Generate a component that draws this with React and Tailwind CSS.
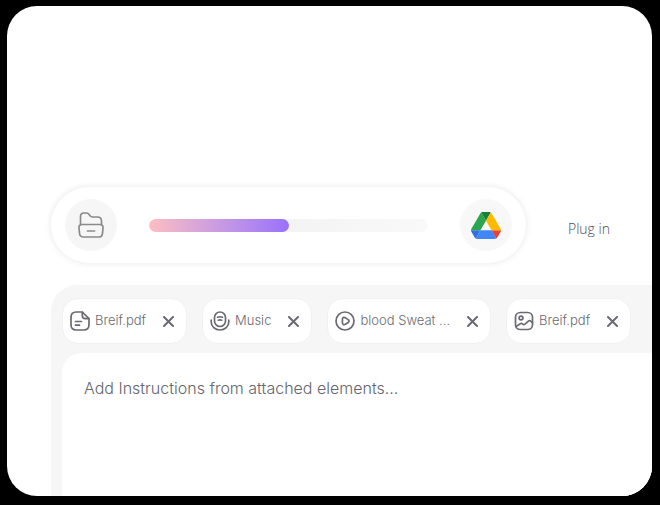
// App.jsx
import { useState } from 'react'

const ATTACHMENTS = [
  { id: 1, name: 'Breif.pdf',       icon: DocIcon,   label: 'document' },
  { id: 2, name: 'Music',           icon: MicIcon,   label: 'audio' },
  { id: 3, name: 'blood Sweat ...', icon: PlayIcon,  label: 'video' },
  { id: 4, name: 'Breif.pdf',       icon: ImageIcon, label: 'image' },
]

const PROGRESS = 50

function Svg({ children }) {
  return (
    <svg
      viewBox="0 0 20 20"
      fill="none"
      stroke="currentColor"
      strokeWidth="1.7"
      strokeLinecap="round"
      strokeLinejoin="round"
      aria-hidden="true"
      className="size-5 shrink-0"
    >
      {children}
    </svg>
  )
}

function DocIcon() {
  return (
    <Svg>
      <path d="M12.3 1H6.2C2.8 1 1 2.8 1 6.2v7.6C1 17.2 2.8 19 6.2 19h7.6c3.4 0 5.2-1.8 5.2-5.2V7.7z" />
      <path d="M12.3 1v3.6c0 2.2.9 3.1 3.1 3.1H19" />
      <path d="M5.5 10.5h6M5.5 14.2h4" />
    </Svg>
  )
}

function MicIcon() {
  return (
    <Svg>
      <rect x="4.5" y="1" width="11" height="14.5" rx="5.5" />
      <path d="M1.2 9v1.8c0 4.600 3.900 8.200 8.800 8.200s8.800-3.600 8.800-8.200V9" />
      <path d="M7.500 6.200c1.600-.6 3.400-.6 5 0M8.300 9.200c1.100-.3 2.300-.3 3.400 0" />
    </Svg>
  )
}

function PlayIcon() {
  return (
    <Svg>
      <circle cx="10" cy="10" r="9" />
      <path d="M7.400 10V8.500c0-1.900 1.300-2.600 2.900-1.700l1.300.8 1.300.8c1.600.9 1.600 2.400 0 3.300l-1.300.8-1.300.8c-1.600.9-2.900.1-2.900-1.700z" />
    </Svg>
  )
}

function ImageIcon() {
  return (
    <Svg>
      <rect x="1.5" y="1.5" width="17" height="17" rx="4.8" />
      <circle cx="7" cy="7" r="1.9" />
      <path d="M2 15.600l4.200-2.800c.7-.5 1.600-.4 2.200.1l.3.300c.6.600 1.600.6 2.300 0l3.400-3c.7-.6 1.700-.6 2.300 0l1.800 1.500" />
    </Svg>
  )
}

function CloseIcon() {
  return (
    <svg viewBox="0 0 11 11" className="size-[11px]" stroke="currentColor"
         strokeWidth="2" strokeLinecap="round" aria-hidden="true">
      <path d="M1 1l9 9M10 1l-9 9" />
    </svg>
  )
}

function FolderIcon() {
  return (
    <svg viewBox="0 0 26 26" fill="none" stroke="currentColor" strokeWidth="1.7"
         strokeLinecap="round" strokeLinejoin="round" className="size-[26px]"
         aria-hidden="true">
      <path d="M2.5 12.5V4.5C2.5 2 3.500 1 6 1h2.200c1.500 0 2.300.5 3 1.500l1 1.400c.6.900 1.200 1.100 2.200 1.100h5.100c2.900 0 4 1.100 4 4v3.500" />
      <path d="M4.200 12.500h17.600c2.300 0 3.400 1.100 3.200 3.200l-.5 5.600c-.2 2.600-1.300 3.700-3.900 3.700H5.400c-2.600 0-3.700-1.100-3.900-3.700L1 15.700c-.2-2.100.9-3.200 3.200-3.200z" />
      <path d="M9.500 19h7" />
    </svg>
  )
}

function DriveIcon() {
  return (
    <svg viewBox="0 0 87.3 78" className="h-[27px] w-[30px]" aria-hidden="true">
      <path fill="#2f6fe0" d="m6.600 66.850 3.850 6.650c.8 1.400 1.950 2.500 3.300 3.300l13.750-23.800H0c0 1.550.4 3.100 1.200 4.500z" />
      <path fill="#2da44f" d="m43.650 25-13.750-23.800c-1.350.8-2.500 1.900-3.300 3.300L1.200 48.500A9 9 0 0 0 0 53h27.500z" />
      <path fill="#ea4335" d="m73.550 76.800c1.350-.8 2.500-1.900 3.300-3.300l1.600-2.750L86.100 57.500c.8-1.400 1.200-2.950 1.200-4.500H59.800l5.850 11.500z" />
      <path fill="#188038" d="M43.650 25 57.400 1.200C56.050.4 54.500 0 52.900 0H34.400c-1.600 0-3.150.45-4.500 1.200z" />
      <path fill="#4285f4" d="M59.800 53H27.500L13.750 76.800c1.350.8 2.900 1.200 4.500 1.200h50.800c1.600 0 3.150-.45 4.500-1.200z" />
      <path fill="#ffba00" d="m73.400 26.500-12.700-22c-.8-1.400-1.950-2.500-3.300-3.300L43.650 25l16.150 28h27.450c0-1.550-.4-3.100-1.200-4.500z" />
    </svg>
  )
}

function Chip({ item, onRemove }) {
  const Icon = item.icon
  return (
    <li className="flex h-[46px] shrink-0 items-center rounded-2xl border border-[#f1f1f1]
                   bg-white pl-[7px] pr-2 text-[#6a6a72]">
      <Icon />
      <span className="ml-[5px] text-[13px]">{item.name}</span>
      <button
        type="button"
        onClick={() => onRemove(item.id)}
        aria-label={`Remove ${item.label} ${item.name}`}
        className="ml-3 flex size-5 cursor-pointer items-center justify-center"
      >
        <CloseIcon />
      </button>
    </li>
  )
}

export default function App() {
  const [items, setItems] = useState(ATTACHMENTS)
  const [text,  setText]  = useState('')

  const remove = (id) => setItems(prev => prev.filter(i => i.id !== id))

  return (
    <div className="flex h-screen bg-black pb-[9px] pl-[7px] pr-2 pt-1.5 font-['Inter',sans-serif] font-light">
      <main className="flex min-w-0 flex-1 flex-col overflow-hidden rounded-[30px] bg-white pl-11 pt-[181px]">

        {/* ── Upload row ── */}
        <div className="flex items-center gap-[42px]">
          <div className="flex h-[76px] w-full max-w-[475px] items-center gap-8 rounded-full
                          bg-white px-3.5 shadow-[0_0_5px_2px_rgba(0,0,0,0.06)]">
            <button
              type="button"
              aria-label="Browse files"
              className="flex size-[52px] shrink-0 cursor-pointer items-center justify-center
                         rounded-full bg-[#f6f6f6] text-[#8a8a8a]"
            >
              <FolderIcon />
            </button>
            <div
              role="progressbar"
              aria-label="Upload"
              aria-valuenow={PROGRESS}
              className="h-[13px] flex-1 overflow-hidden rounded-full
                         bg-linear-to-r from-[#eeeeee] to-[#f9f9f9]"
            >
              <div
                className="h-full rounded-full bg-linear-to-r from-[#fdbdc0] to-[#9a70fb]"
                style={{ width: `${PROGRESS}%` }}
              />
            </div>
            <button
              type="button"
              aria-label="Google Drive"
              className="flex size-[52px] shrink-0 cursor-pointer items-center justify-center
                         rounded-full bg-[#f8f8f8]"
            >
              <DriveIcon />
            </button>
          </div>
          <button type="button"
                  className="shrink-0 cursor-pointer pt-2 font-['Open_Sans',sans-serif]
                             text-sm text-[#4b4b58]">
            Plug in
          </button>
        </div>

        {/* ── Attachments + instructions ── */}
        <section className="mt-[22px] flex min-h-0 flex-1 flex-col rounded-tl-[26px] bg-[#f6f6f6] pl-[11px] pt-[13px]">
          <ul className="flex gap-[15px]">
            {items.map(item => (
              <Chip key={item.id} item={item} onRemove={remove} />
            ))}
          </ul>
          <textarea
            aria-label="Instructions"
            value={text}
            onChange={e => setText(e.target.value)}
            placeholder="Add Instructions from attached elements..."
            className="mt-[9px] w-full flex-1 resize-none rounded-tl-[20px] bg-white px-[22px] pt-[23px]
                       text-base text-[#5f6068] outline-none
                       placeholder:text-[#64656d]"
          />
        </section>

      </main>
    </div>
  )
}
